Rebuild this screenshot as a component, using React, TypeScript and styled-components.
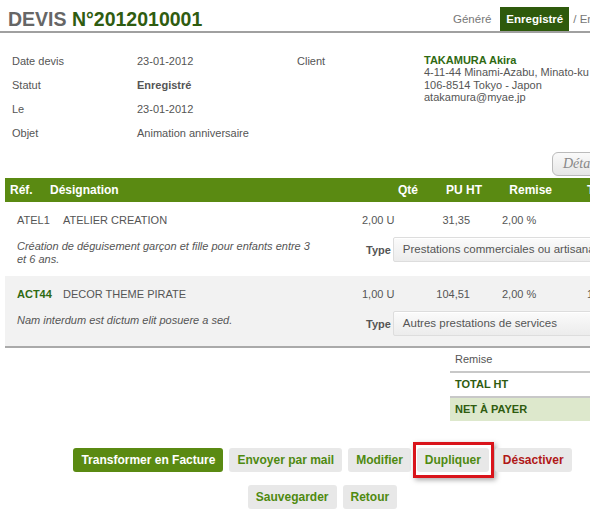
import React from 'react';
import styled, { createGlobalStyle } from 'styled-components';

const GlobalStyle = createGlobalStyle`
  html, body {
    margin: 0;
    padding: 0;
    background: #fff;
    overflow: hidden;
  }
  body {
    font-family: 'Liberation Sans', Arial, sans-serif;
    font-size: 11px;
    color: #555;
  }
`;

const Page = styled.div`
  width: 645px;
  padding-top: 6px;
`;

const Header = styled.div`
  display: flex;
  align-items: flex-end;
  border-bottom: 2px solid #a0a0a0;
  height: 25px;
`;

const Title = styled.h1`
  margin: 0 0 0 8px;
  font-size: 19.5px;
  font-weight: bold;
  color: #666;
  line-height: 24px;
  white-space: nowrap;

  span {
    color: #2f5c10;
  }
`;

const Steps = styled.div`
  display: flex;
  align-items: stretch;
  margin-left: auto;
  margin-right: 23px;
  height: 24px;
  white-space: nowrap;
`;

const Step = styled.div<{ $active?: boolean }>`
  display: flex;
  align-items: center;
  padding: 0 ${(p) => (p.$active ? '6px' : '4px')};
  margin-left: ${(p) => (p.$active ? '5px' : '0')};
  font-size: 11.5px;
  color: ${(p) => (p.$active ? '#fff' : '#777')};
  background: ${(p) => (p.$active ? '#2e5a0c' : 'transparent')};
  font-weight: ${(p) => (p.$active ? 'bold' : 'normal')};
`;

const Info = styled.div`
  display: grid;
  grid-template-columns: 125px 160px 127px 1fr;
  padding: 21px 0 0 12px;
`;

const InfoCol = styled.div`
  display: flex;
  flex-direction: column;
`;

const InfoCell = styled.div<{ $bold?: boolean }>`
  height: 24px;
  line-height: 14px;
  font-weight: ${(p) => (p.$bold ? 'bold' : 'normal')};
`;

const Address = styled.div`
  line-height: 12.4px;
  white-space: nowrap;

  strong {
    color: #2f6a12;
  }
`;

const DetailBar = styled.div`
  display: flex;
  justify-content: flex-end;
  padding: 2px 13px 2px 0;
`;

const DetailButton = styled.button`
  font-family: 'Liberation Serif', 'Times New Roman', serif;
  font-style: italic;
  font-size: 14px;
  color: #888;
  background: linear-gradient(#fafafa, #e6e6e6);
  border: 1px solid #bbb;
  border-radius: 6px;
  height: 24px;
  width: 80px;
  text-align: left;
  padding: 0 10px;
`;

const Table = styled.div`
  margin-left: 5px;
`;

const HeadRow = styled.div`
  display: grid;
  grid-template-columns: 40px 300px 68px 64px 70px 1fr;
  align-items: center;
  height: 24px;
  background: #5a8a12;
  color: #fff;
  font-weight: bold;
  font-size: 12px;
  padding-left: 5px;
`;

const HeadCell = styled.div<{ $right?: boolean; $pad?: number }>`
  text-align: ${(p) => (p.$right ? 'right' : 'left')};
  padding-left: ${(p) => p.$pad ?? 0}px;
  white-space: nowrap;
`;

const Line = styled.div<{ $shaded?: boolean }>`
  background: ${(p) => (p.$shaded ? '#f2f2f2' : '#fff')};
  padding: 11px 0 10px 12px;
`;

const LineMain = styled.div`
  display: grid;
  grid-template-columns: 46px 299px 60px 48px 32px 85px 33px;
  line-height: 14px;
  white-space: nowrap;
`;

const Cell = styled.div<{ $right?: boolean; $ref?: boolean }>`
  text-align: ${(p) => (p.$right ? 'right' : 'left')};
  font-weight: ${(p) => (p.$ref ? 'bold' : 'normal')};
  color: ${(p) => (p.$ref ? '#2f6a12' : 'inherit')};
`;

const Spacer = styled.div``;

const LineDetail = styled.div`
  display: flex;
  align-items: flex-start;
  margin-top: 10px;
`;

const Description = styled.div`
  flex: none;
  width: 304px;
  font-style: italic;
  line-height: 13px;
  padding-top: 3px;
`;

const TypeField = styled.div`
  flex: none;
  display: flex;
  align-items: center;
  margin-left: 45px;
  gap: 2px;
`;

const TypeLabel = styled.span`
  font-weight: bold;
  color: #555;
`;

const Select = styled.div`
  width: 240px;
  height: 23px;
  line-height: 23px;
  padding-left: 9px;
  font-size: 11.5px;
  border: 1px solid #ddd;
  border-radius: 2px;
  background: linear-gradient(#fbfbfb, #ececec);
  box-shadow: inset 0 1px 0 #fff;
  white-space: nowrap;
  overflow: hidden;
`;

const TableEnd = styled.div`
  border-top: 2px solid #aaa;
  margin-left: 5px;
`;

const Totals = styled.div`
  margin-left: 450px;
`;

const TotalRow = styled.div<{ $strong?: boolean; $net?: boolean }>`
  height: 23px;
  line-height: 23px;
  padding-left: 5px;
  border-bottom: ${(p) => (p.$net ? 'none' : '2px solid #c8c8c8')};
  font-weight: ${(p) => (p.$strong ? 'bold' : 'normal')};
  color: ${(p) => (p.$strong ? '#2f5c10' : '#555')};
  background: ${(p) => (p.$net ? '#dde8cc' : 'transparent')};
`;

const Actions = styled.div`
  display: flex;
  flex-direction: column;
  align-items: center;
  gap: 13px;
  padding-top: 27px;
`;

const ActionRow = styled.div`
  display: flex;
  gap: 6px;
`;

type Tone = 'primary' | 'default' | 'danger';

const Button = styled.button<{ $tone?: Tone; $focus?: boolean }>`
  position: relative;
  font-family: 'Liberation Sans', Arial, sans-serif;
  font-size: 12px;
  font-weight: bold;
  height: 24px;
  padding: 0 8px;
  border: none;
  border-radius: 3px;
  cursor: pointer;
  background: ${(p) => (p.$tone === 'primary' ? '#5a8a12' : '#e8e8e8')};
  color: ${(p) =>
    p.$tone === 'primary' ? '#fff' : p.$tone === 'danger' ? '#b01818' : '#4f8a10'};

  ${(p) =>
    p.$focus &&
    `
    &::after {
      content: '';
      position: absolute;
      top: -6px;
      left: -4px;
      right: -5px;
      bottom: -6px;
      border: 3px solid #d9141b;
      box-shadow: 2px 2px 5px rgba(0, 0, 0, 0.35);
    }
  `}
`;

const lines = [
  {
    ref: 'ATEL1',
    strongRef: false,
    label: 'ATELIER CREATION',
    qty: '2,00 U',
    pu: '31,35',
    remise: '2,00 %',
    total: '61,45',
    desc: 'Création de déguisement garçon et fille pour enfants entre 3 et 6 ans.',
    type: 'Prestations commerciales ou artisanales',
  },
  {
    ref: 'ACT44',
    strongRef: true,
    label: 'DECOR THEME PIRATE',
    qty: '1,00 U',
    pu: '104,51',
    remise: '2,00 %',
    total: '102,42',
    desc: 'Nam interdum est dictum elit posuere a sed.',
    type: 'Autres prestations de services',
  },
];

export default function App() {
  return (
    <Page>
      <GlobalStyle />
      <Header>
        <Title>
          DEVIS <span>N°2012010001</span>
        </Title>
        <Steps>
          <Step>Généré</Step>
          <Step $active>Enregistré</Step>
          <Step>/ Envoyé</Step>
        </Steps>
      </Header>

      <Info>
        <InfoCol>
          <InfoCell>Date devis</InfoCell>
          <InfoCell>Statut</InfoCell>
          <InfoCell>Le</InfoCell>
          <InfoCell>Objet</InfoCell>
        </InfoCol>
        <InfoCol>
          <InfoCell>23-01-2012</InfoCell>
          <InfoCell $bold>Enregistré</InfoCell>
          <InfoCell>23-01-2012</InfoCell>
          <InfoCell>Animation anniversaire</InfoCell>
        </InfoCol>
        <InfoCol>
          <InfoCell>Client</InfoCell>
        </InfoCol>
        <Address>
          <strong>TAKAMURA Akira</strong>
          <br />
          4-11-44 Minami-Azabu, Minato-ku
          <br />
          106-8514 Tokyo - Japon
          <br />
          atakamura@myae.jp
        </Address>
      </Info>

      <DetailBar>
        <DetailButton>Détail</DetailButton>
      </DetailBar>

      <Table>
        <HeadRow>
          <HeadCell>Réf.</HeadCell>
          <HeadCell>Désignation</HeadCell>
          <HeadCell $right>Qté</HeadCell>
          <HeadCell $right>PU HT</HeadCell>
          <HeadCell $right>Remise</HeadCell>
          <HeadCell $pad={35}>Total</HeadCell>
        </HeadRow>
        {lines.map((l, i) => (
          <Line key={l.ref} $shaded={i % 2 === 1}>
            <LineMain>
              <Cell $ref={l.strongRef}>{l.ref}</Cell>
              <Cell>{l.label}</Cell>
              <Cell>{l.qty}</Cell>
              <Cell $right>{l.pu}</Cell>
              <Spacer />
              <Cell>{l.remise}</Cell>
              <Cell $right>{l.total}</Cell>
            </LineMain>
            <LineDetail>
              <Description>{l.desc}</Description>
              <TypeField>
                <TypeLabel>Type</TypeLabel>
                <Select>{l.type}</Select>
              </TypeField>
            </LineDetail>
          </Line>
        ))}
      </Table>
      <TableEnd />

      <Totals>
        <TotalRow>Remise</TotalRow>
        <TotalRow $strong>TOTAL HT</TotalRow>
        <TotalRow $strong $net>
          NET À PAYER
        </TotalRow>
      </Totals>

      <Actions>
        <ActionRow>
          <Button $tone="primary">Transformer en Facture</Button>
          <Button>Envoyer par mail</Button>
          <Button>Modifier</Button>
          <Button $focus>Dupliquer</Button>
          <Button $tone="danger">Désactiver</Button>
        </ActionRow>
        <ActionRow>
          <Button>Sauvegarder</Button>
          <Button>Retour</Button>
        </ActionRow>
      </Actions>
    </Page>
  );
}
